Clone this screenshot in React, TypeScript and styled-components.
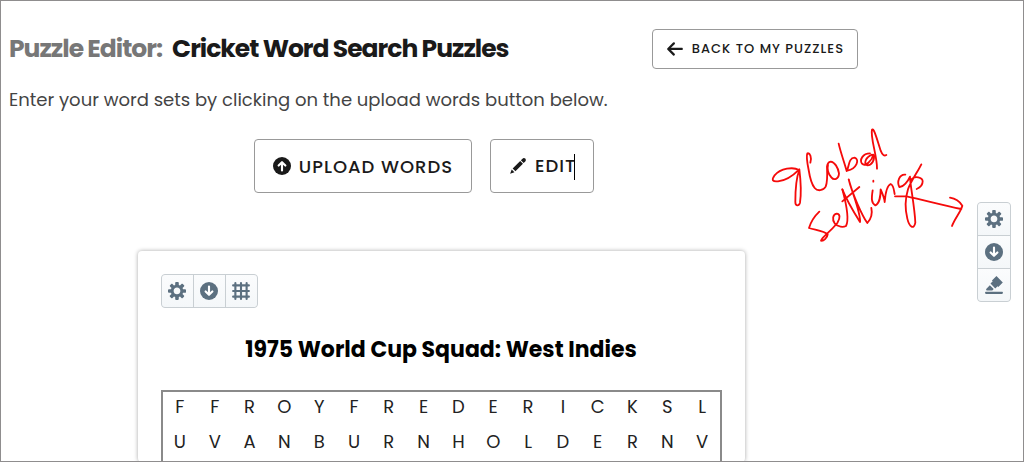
import React from "react";
import styled, { createGlobalStyle, css } from "styled-components";

const GlobalStyle = createGlobalStyle`
  *, *::before, *::after { box-sizing: border-box; }
  body {
    margin: 0;
    background: #fff;
    color: #1a1a1a;
    font-family: Poppins, Inter, "Liberation Sans", sans-serif;
  }
  h1, h2, p { margin: 0; }
`;

const Frame = styled.div`
  position: relative;
  height: 100vh;
  overflow: hidden;
  border: 1px solid #8f8d8e;
`;

const Page = styled.main`
  display: flex;
  flex-direction: column;
  height: 100%;
  padding: 28px 150px 0 8px;
`;

const Header = styled.header`
  display: flex;
  align-items: center;
  justify-content: space-between;
  padding-right: 15px;
`;

const Title = styled.h1`
  display: flex;
  gap: 10px;
  font-size: 25px;
  line-height: 38px;
  font-weight: 700;
  letter-spacing: -1px;
  white-space: nowrap;
`;

const TitlePrefix = styled.span`
  color: #777;
`;

const Intro = styled.p`
  margin-top: 19px;
  font-size: 18px;
  line-height: 24px;
  color: #444;
`;

const OutlineButton = styled.button<{ $large?: boolean }>`
  display: flex;
  align-items: center;
  gap: 8px;
  height: 40px;
  padding: 0 13px;
  border: 1px solid #999;
  border-radius: 4px;
  background: #fff;
  color: #1a1a1a;
  font-family: inherit;
  font-size: 13px;
  font-weight: 500;
  letter-spacing: 1px;
  white-space: nowrap;
  ${({ $large }) =>
    $large &&
    css`
      height: 54px;
      padding: 0 18px;
      font-size: 18px;
    `}
`;

const Actions = styled.div`
  display: flex;
  justify-content: center;
  gap: 18px;
  margin-top: 27px;
  padding-right: 34px;
`;

const Caret = styled.span`
  display: inline-block;
  width: 1px;
  height: 26px;
  margin-left: -2px;
  background: #000;
  vertical-align: middle;
`;

const Card = styled.section`
  display: flex;
  flex-direction: column;
  flex: 1;
  align-self: center;
  width: 100%;
  max-width: 607px;
  margin-top: 58px;
  padding: 23px 23px 0;
  border-radius: 4px;
  box-shadow: 0 0 4px rgba(0, 0, 0, 0.35);
`;

const IconButton = styled.button`
  display: flex;
  align-items: center;
  justify-content: center;
  width: 32px;
  height: 32px;
  padding: 0;
  border: 0;
  background: linear-gradient(#fbfcfd, #f4f7f9);
  color: #5c7080;
`;

const IconGroup = styled.div<{ $vertical?: boolean }>`
  display: flex;
  flex-direction: ${({ $vertical }) => ($vertical ? "column" : "row")};
  align-self: flex-start;
  gap: 1px;
  border: 1px solid #c9cfd3;
  border-radius: 4px;
  background: #c9cfd3;
  overflow: hidden;

  ${IconButton} {
    width: ${({ $vertical }) => ($vertical ? "32px" : "31px")};
  }
`;

const PuzzleTitle = styled.h2`
  margin-top: 25px;
  color: #000;
  font-size: 22px;
  line-height: 34px;
  font-weight: 700;
  text-align: center;
`;

const GridFrame = styled.div`
  flex: 1;
  margin-top: 23px;
  border: 2px solid #8a8a8a;
  border-bottom: 0;
`;

const LetterGrid = styled.table`
  width: 100%;
  table-layout: fixed;
  border-collapse: collapse;
  color: #222;
  font-size: 18px;
  line-height: 30px;
  text-align: center;

  td {
    height: 35px;
    padding: 0;
    vertical-align: top;
  }
`;

const SideRail = styled.aside`
  position: absolute;
  top: 119px;
  right: 12px;
  display: flex;
  gap: 7px;
`;

const RailTools = styled.div`
  margin-top: 82px;
`;

type IconProps = { size?: number; children: React.ReactNode };

const Icon = ({ size = 18, children }: IconProps) => (
  <svg width={size} height={size} viewBox="0 0 16 16" fill="currentColor" aria-hidden="true">
    {children}
  </svg>
);

const CogIcon = () => (
  <Icon>
    <path fillRule="evenodd" d="M15.19 6.39h-1.85c-.11-.37-.27-.71-.45-1.04l1.36-1.36c.31-.31.31-.82 0-1.13l-1.13-1.13c-.31-.31-.82-.31-1.13 0l-1.36 1.36c-.33-.17-.67-.33-1.04-.44V.79c0-.44-.36-.8-.8-.8h-1.6c-.44 0-.8.36-.8.8v1.86c-.39.12-.75.28-1.1.47l-1.3-1.3c-.3-.3-.79-.3-1.09 0L1.82 2.91c-.3.3-.3.79 0 1.09l1.3 1.3c-.2.34-.36.7-.48 1.09H.79c-.44 0-.8.36-.8.8v1.6c0 .44.36.8.8.8h1.85c.11.37.27.71.45 1.04l-1.36 1.36c-.31.31-.31.82 0 1.13l1.13 1.13c.31.31.82.31 1.13 0l1.36-1.36c.33.18.67.33 1.04.44v1.86c0 .44.36.8.8.8h1.6c.44 0 .8-.36.8-.8v-1.86c.39-.12.75-.28 1.1-.47l1.3 1.3c.3.3.79.3 1.09 0l1.09-1.09c.3-.3.3-.79 0-1.09l-1.3-1.3c.19-.35.36-.71.48-1.1h1.85c.44 0 .8-.36.8-.8v-1.6a.816.816 0 00-.81-.79zm-7.2 4.6c-1.66 0-3-1.34-3-3s1.34-3 3-3 3 1.34 3 3-1.34 3-3 3z" />
  </Icon>
);

const CircleArrowIcon = ({ up }: { up?: boolean }) => (
  <Icon>
    <circle cx="8" cy="8" r="8" />
    <path
      d={up ? "M8 12V5M5 7.6L8 4.6l3 3" : "M8 4v7M5 8.4l3 3 3-3"}
      fill="none"
      stroke="#fff"
      strokeWidth="1.9"
      strokeLinecap="round"
      strokeLinejoin="round"
    />
  </Icon>
);

const GridIcon = () => (
  <Icon>
    <path
      d="M3 1v14M8 1v14M13 1v14M1 3h14M1 8h14M1 13h14"
      stroke="currentColor"
      strokeWidth="1.9"
      strokeLinecap="round"
    />
  </Icon>
);

const HighlightIcon = () => (
  <Icon>
    <path d="M9.12 11.07l2-2.02.71.71 4-4.04L10.17 0l-4 4.04.71.71-2 2.02 4.24 4.3zM2 12.97h4c.28 0 .53-.11.71-.3l1-1.01-3.42-3.45-3 3.03c-.18.18-.29.44-.29.72 0 .55.45 1.01 1 1.01zm13 1.01H1c-.55 0-1 .45-1 1.01S.45 16 1 16h14c.55 0 1-.45 1-1.01s-.45-1.01-1-1.01z" />
  </Icon>
);

const PencilIcon = () => (
  <Icon>
    <path d="M3.25 10.26l2.47 2.47 6.69-6.69-2.46-2.48-6.7 6.7zM.99 14.99l3.86-1.39-2.46-2.44L.99 14.99zm12.25-14c-.48 0-.92.2-1.24.51l-1.44 1.44 2.47 2.47 1.44-1.44c.32-.32.51-.75.51-1.24.01-.95-.77-1.74-1.74-1.74z" />
  </Icon>
);

const BackIcon = () => (
  <Icon>
    <path d="M13.99 6.99H4.41L7.7 3.7a1.003 1.003 0 00-1.42-1.42l-5 5a1.014 1.014 0 000 1.42l5 5a1.003 1.003 0 001.42-1.41L4.41 8.99H14c.55 0 1-.45 1-1s-.46-1-1.01-1z" />
  </Icon>
);

/* Pen strokes of the handwritten note and its arrow. */
const PenNote = () => (
  <svg
    width="210"
    height="130"
    viewBox="0 0 630 390"
    role="img"
    aria-label="global settings"
    fill="none"
    stroke="#f50a0a"
    strokeWidth="5.5"
    strokeLinecap="round"
    strokeLinejoin="round"
  >
    <path d="M117 150C100 140 62 144 43 167C34 180 38 186 54 184C76 182 98 168 118 148C122 180 124 220 120 248C116 260 106 258 106 246C106 222 106 180 118 150" />
    <path d="M151 128C156 112 150 98 142 100C138 108 142 130 146 150C150 176 156 194 164 204C172 214 190 213 197 200C203 186 202 160 201 140C202 132 206 126 212 125C224 126 234 142 237 160C236 178 222 182 214 172C204 160 200 150 204 134" />
    <path d="M236 71C242 98 254 130 260 153C268 142 264 114 284 113C300 118 290 146 262 152" />
    <path d="M330 100C308 100 298 120 306 131C316 142 336 122 340 104C346 118 336 136 322 136C310 132 316 112 336 104M351 146C352 110 330 50 336 29C342 22 352 62 362 92C368 108 374 108 379 105" />
    <path d="M178 275C164 288 152 308 147 324C166 330 194 334 203 343C202 354 190 364 183 362C186 352 208 338 232 309C242 292 240 282 230 281C218 284 216 298 224 310C234 322 250 322 258 318C268 300 260 256 247 208" />
    <path d="M247 208C258 236 290 290 300 306C304 284 276 216 266 178C276 220 308 290 322 309C332 298 338 282 334 264M247 244L298 201" />
    <path d="M340 182v3M338 211C334 236 334 250 346 256C358 252 362 226 362 208C368 222 374 240 374 246C376 222 382 196 392 192C402 196 402 214 404 222" />
    <path d="M436 164C418 162 410 186 418 201C430 202 444 184 450 170C450 192 464 260 466 308C462 330 448 322 442 296C434 264 436 234 444 208C452 184 474 154 484 133M454 178C464 166 488 172 488 184C488 196 478 204 470 207" />
    <path d="M405 229H440C490 240 550 256 604 267M570 233C590 236 600 246 607 257C602 276 584 296 576 318" />
  </svg>
);

const rows = ["FFROYFREDERICKSL", "UVANBURNHOLDERNV"];

export default function App() {
  return (
    <Frame>
      <GlobalStyle />
      <Page>
        <Header>
          <Title>
            <TitlePrefix>Puzzle Editor:</TitlePrefix>
            <span>Cricket Word Search Puzzles</span>
          </Title>
          <OutlineButton type="button">
            <BackIcon />
            BACK TO MY PUZZLES
          </OutlineButton>
        </Header>
        <Intro>Enter your word sets by clicking on the upload words button below.</Intro>
        <Actions>
          <OutlineButton type="button" $large>
            <CircleArrowIcon up />
            UPLOAD WORDS
          </OutlineButton>
          <OutlineButton type="button" $large>
            <PencilIcon />
            <span>
              EDIT
              <Caret />
            </span>
          </OutlineButton>
        </Actions>
        <Card>
          <IconGroup>
            <IconButton type="button" aria-label="Puzzle settings">
              <CogIcon />
            </IconButton>
            <IconButton type="button" aria-label="Download puzzle">
              <CircleArrowIcon />
            </IconButton>
            <IconButton type="button" aria-label="Grid">
              <GridIcon />
            </IconButton>
          </IconGroup>
          <PuzzleTitle>1975 World Cup Squad: West Indies</PuzzleTitle>
          <GridFrame>
            <LetterGrid>
              <tbody>
                {rows.map((row) => (
                  <tr key={row}>
                    {row.split("").map((letter, i) => (
                      <td key={i}>{letter}</td>
                    ))}
                  </tr>
                ))}
              </tbody>
            </LetterGrid>
          </GridFrame>
        </Card>
      </Page>
      <SideRail>
        <PenNote />
        <RailTools>
          <IconGroup $vertical>
            <IconButton type="button" aria-label="Global settings">
              <CogIcon />
            </IconButton>
            <IconButton type="button" aria-label="Download all">
              <CircleArrowIcon />
            </IconButton>
            <IconButton type="button" aria-label="Highlight">
              <HighlightIcon />
            </IconButton>
          </IconGroup>
        </RailTools>
      </SideRail>
    </Frame>
  );
}
